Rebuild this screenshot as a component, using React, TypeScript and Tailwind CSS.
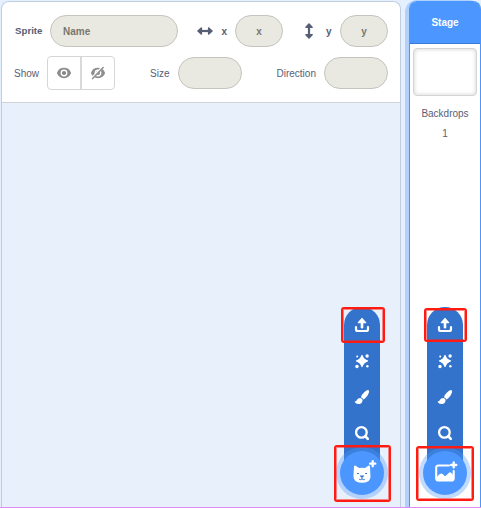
import type { ReactNode } from 'react';

function UploadIcon() {
  return (
    <svg width="20" height="20" viewBox="0 0 20 20" fill="none">
      <path d="M10 12.2V6" stroke="#fff" strokeWidth="2.6" strokeLinecap="round" />
      <path d="M10 3.6L13.6 7.6H6.4Z" fill="#fff" stroke="#fff" strokeWidth="1.4" strokeLinejoin="round" />
      <path d="M4 12V14.2Q4 16 5.8 16H14.2Q16 16 16 14.2V12" stroke="#fff" strokeWidth="2.2" strokeLinecap="round" />
    </svg>
  );
}

function SurpriseIcon() {
  return (
    <svg width="20" height="20" viewBox="0 0 20 20" fill="#fff">
      <path d="M10 3.8Q10.6 3.8 11.2 5.8Q12 8 14.2 8.8Q16.2 9.4 16.2 10Q16.2 10.6 14.2 11.2Q12 12 11.2 14.2Q10.6 16.2 10 16.2Q9.4 16.2 8.8 14.2Q8 12 5.8 11.2Q3.8 10.6 3.8 10Q3.8 9.4 5.8 8.8Q8 8 8.8 5.8Q9.4 3.8 10 3.8Z" />
      <circle cx="5.2" cy="5.4" r="1" />
      <circle cx="15.1" cy="5" r="1.7" />
      <circle cx="5" cy="15.5" r="1.7" />
      <circle cx="15.4" cy="15.3" r="1.2" />
    </svg>
  );
}

function BrushIcon() {
  return (
    <svg width="20" height="20" viewBox="0 0 20 20" fill="#fff">
      <path d="M16.3 3.1Q17.7 3.5 16.9 5.8Q15.7 9.2 13 11.6L11.3 12.5Q10.6 10.8 8.9 10.3Q9.6 7.7 12 5.5Q14.8 3 16.3 3.1Z" />
      <path d="M8.2 10.9Q10.4 11.1 10.6 13.1Q10.4 16.4 7.6 17Q4.6 17.3 2.8 15.2Q2.5 14.3 3.6 14.2Q4.6 14 5 12.7Q5.8 10.9 8.2 10.9Z" />
    </svg>
  );
}

function SearchIcon() {
  return (
    <svg width="20" height="20" viewBox="0 0 20 20" fill="none" stroke="#fff" strokeLinecap="round">
      <circle cx="9.4" cy="9.4" r="5.3" strokeWidth="2.3" />
      <path d="M13.5 13.5L15.8 15.8" strokeWidth="2.6" />
    </svg>
  );
}

function CatIcon() {
  return (
    <svg width="44" height="44" viewBox="0 0 44 44">
      <path d="M14 15.2Q14.4 14 15.6 14.7L19.1 17Q22 16.3 25 17L28.3 14.7Q29.7 14 30 15.4L30.3 23Q31.2 27.5 28.4 30.2Q22 33.3 15.7 30.2Q12.8 27.5 13.6 23Z" fill="#fff" />
      <path d="M19.8 24.5H24.2Q24 26.2 22 26.5Q20 26.2 19.8 24.5ZM17 22H18.8V23H17ZM25.2 22H27V23H25.2Z" fill="#3373cc" />
      <path d="M22 26V27.8M19.2 28.3Q20.9 29.3 22 27.8Q23.1 29.3 24.8 28.3" fill="none" stroke="#3373cc" strokeWidth="1" />
      <path d="M32.7 10.1V15.3M30.1 12.7H35.3" stroke="#fff" strokeWidth="2.3" strokeLinecap="round" />
    </svg>
  );
}

function BackdropIcon() {
  return (
    <svg width="44" height="44" viewBox="0 0 44 44" fill="none">
      <path d="M26 14.5H15.5Q13.2 14.5 13.2 16.8V27.2Q13.2 29.5 15.5 29.5H28.3Q30.7 29.5 30.7 27.2V20" stroke="#fff" strokeWidth="2.1" strokeLinecap="round" />
      <path d="M14 26Q16 23 18 22.6Q19.7 22.5 21 24.4Q22 25.4 23.1 24.6L26 21.8Q27.2 20.8 28.4 22.1L30.3 24.2V29H14Z" fill="#fff" />
      <path d="M30.7 11.4V16.6M28.1 14H33.3" stroke="#fff" strokeWidth="2.3" strokeLinecap="round" />
    </svg>
  );
}

function EyeIcon({ off = false }: { off?: boolean }) {
  return (
    <svg width="16" height="16" viewBox="0 0 16 16" fill="none">
      <path fillRule="evenodd" d="M8 2.8Q13.4 2.9 15.1 8Q13.4 13.1 8 13.2Q2.6 13.1 .9 8Q2.6 2.9 8 2.8ZM8 4.6A3.4 3.4 0 1 0 8 11.4A3.4 3.4 0 0 0 8 4.6Z" fill="#8d8d8d" />
      <circle cx="8" cy="8" r="2.1" fill="#858585" />
      {off && (
        <>
          <path d="M2 13.2L13 1.8" stroke="#fff" strokeWidth="2.6" />
          <path d="M2.6 13.6L13.2 2.5" stroke="#8d8d8d" strokeWidth="1.5" strokeLinecap="round" />
        </>
      )}
    </svg>
  );
}

function DoubleArrow({ vertical = false }: { vertical?: boolean }) {
  return (
    <svg width="16" height="16" viewBox="0 0 16 16" className={vertical ? 'rotate-90' : ''}>
      <path d="M3 8H13" stroke="#575e75" strokeWidth="2.2" />
      <path d="M1 8L4.3 5V11ZM15 8L11.7 5V11Z" fill="#575e75" stroke="#575e75" strokeWidth="1.6" strokeLinejoin="round" />
    </svg>
  );
}

function Field({ size, children }: { size: string; children?: ReactNode }) {
  return (
    <div className={`flex h-8 shrink-0 items-center rounded-full border border-[#c5c5bf] bg-[#e9e9e1] text-[10px] font-bold text-[#77776f] ${size}`}>
      {children}
    </div>
  );
}

function ActionMenu({ place, children }: { place: string; children: ReactNode }) {
  return (
    <div className={`absolute flex w-[52px] flex-col items-center ${place}`}>
      <div className="flex h-[155px] w-9 flex-col items-center rounded-t-[18px] bg-[#3373cc]">
        <div className="flex h-9 items-center"><UploadIcon /></div>
        <div className="flex h-9 items-center"><SurpriseIcon /></div>
        <div className="flex h-9 items-center"><BrushIcon /></div>
        <div className="flex h-9 items-center"><SearchIcon /></div>
      </div>
      <div className="-mt-[15px] flex size-[52px] items-center justify-center rounded-full bg-[#4c97ff]/35">
        <div className="size-11 rounded-full bg-[#4c97ff]">{children}</div>
      </div>
    </div>
  );
}

function Highlight({ place }: { place: string }) {
  return <div className={`absolute rounded-[3px] border-2 border-[#ff1b12] shadow-[inset_0_0_0_1px_rgba(255,27,18,0.5)] ${place}`} />;
}

export default function App() {
  return (
    <div className="relative flex h-[508px] w-[481px] flex-col overflow-hidden bg-[#e5f0ff] font-['Liberation_Sans',Arial,sans-serif] text-[10px] text-[#575e75]">
      <div className="flex min-h-0 flex-1">
        <section className="ml-px mt-px w-[400px] rounded-t-lg border border-b-0 border-[#bfcddf] bg-[#e8f0fc]">
          <header className="h-[101px] rounded-t-[7px] border-b border-[#d0d3d8] bg-white pt-[13px]">
            <div className="flex h-8 items-center">
              <span className="ml-[13px] w-[35px] text-[9.7px] font-bold">Sprite</span>
              <Field size="w-32 pl-3">Name</Field>
              <span className="ml-[19px]"><DoubleArrow /></span>
              <span className="ml-[8.5px] w-[13.5px] font-bold">x</span>
              <Field size="w-12 justify-center">x</Field>
              <span className="ml-[18px]"><DoubleArrow vertical /></span>
              <span className="ml-[9px] w-[14px] font-bold">y</span>
              <Field size="w-12 justify-center">y</Field>
            </div>
            <div className="mt-[9px] flex h-[34px] items-center">
              <span className="ml-3 w-[33px]">Show</span>
              <div className="flex h-[34px] w-[68px] rounded border border-[#d6d6d6]">
                <div className="flex w-[34px] items-center justify-center border-r-2 border-[#d9d9d9]"><EyeIcon /></div>
                <div className="flex flex-1 items-center justify-center"><EyeIcon off /></div>
              </div>
              <span className="ml-[35px] w-7">Size</span>
              <Field size="w-16" />
              <span className="ml-[34.5px] w-[47.5px]">Direction</span>
              <Field size="w-16" />
            </div>
          </header>
        </section>
        <aside className="ml-1 flex w-[76px] rounded-t-xl bg-[#b1d1fc] pl-1">
          <div className="mt-px flex w-[72px] flex-col items-center rounded-t-lg border-x border-t border-[#4c97ff] bg-white">
            <div className="flex h-[42px] w-full items-center justify-center rounded-t-[6px] border-b border-[#3979d8] bg-[#4c97ff] text-[10px] font-bold text-white">Stage</div>
            <div className="mt-1 h-12 w-16 shrink-0 rounded border border-[#d5d5d5] shadow-[inset_0_0_4px_#d0d0d0]" />
            <span className="mt-[10px] leading-4">Backdrops</span>
            <span className="mt-1 leading-4">1</span>
          </div>
        </aside>
      </div>
      <div className="h-px bg-[#df8df5]" />
      <ActionMenu place="left-[336px] top-[307px]"><CatIcon /></ActionMenu>
      <ActionMenu place="left-[419px] top-[307px]"><BackdropIcon /></ActionMenu>
      <Highlight place="left-[341px] top-[307px] h-9 w-11" />
      <Highlight place="left-[424px] top-[308px] h-[34px] w-[43px]" />
      <Highlight place="left-[334px] top-[445px] h-[57px] w-[57px]" />
      <Highlight place="left-[416px] top-[446px] h-[55px] w-[58px]" />
    </div>
  );
}
